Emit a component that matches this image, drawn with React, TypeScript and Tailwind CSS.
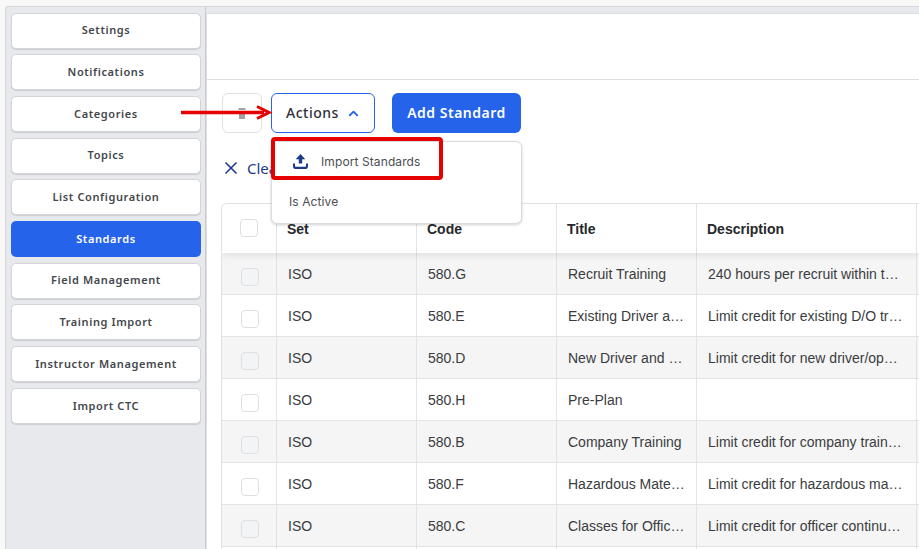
import React from 'react';
import { ChevronUp, X } from 'lucide-react';

const menuItems = [
  'Settings',
  'Notifications',
  'Categories',
  'Topics',
  'List Configuration',
  'Standards',
  'Field Management',
  'Training Import',
  'Instructor Management',
  'Import CTC',
];

const rows = [
  ['ISO', '580.G', 'Recruit Training', '240 hours per recruit within the first year of employment'],
  ['ISO', '580.E', 'Existing Driver and Operator', 'Limit credit for existing D/O training hours per year'],
  ['ISO', '580.D', 'New Driver and Operator', 'Limit credit for new driver/operator training hours'],
  ['ISO', '580.H', 'Pre-Plan', ''],
  ['ISO', '580.B', 'Company Training', 'Limit credit for company training hours per member'],
  ['ISO', '580.F', 'Hazardous Materials', 'Limit credit for hazardous materials training hours'],
  ['ISO', '580.C', 'Classes for Officers', 'Limit credit for officer continuing education hours'],
  ['ISO', '580.A', 'Facilities', 'Limit credit for facilities training'],
];

const Checkbox = ({ muted }: { muted?: boolean }) => (
  <div className={`w-[18px] h-[18px] rounded-[4px] border border-[#dcdfe3] ${muted ? 'bg-[#f3f4f6]' : 'bg-white'}`} />
);

const App: React.FC = () => {
  return (
    <div className="relative w-[919px] h-[549px] overflow-hidden bg-[#f8f8f8] pl-[5px] pt-[6px] font-['Noto_Sans',sans-serif]">
      <div className="flex h-[560px] rounded-tl-[4px] border-l border-t border-[#d5d6d9] bg-[#e8e9ed]">
        {/* side menu */}
        <div className="w-[200px] shrink-0 border-r border-[#c9cbcf] pl-[5px] pt-[5.6px]">
          <div className="flex w-[190px] flex-col gap-[5.7px]">
            {menuItems.map((item) => (
              <div
                key={item}
                className={`flex h-[36px] items-center justify-center rounded-[5px] text-[11px] font-semibold tracking-[0.6px] ${
                  item === 'Standards'
                    ? 'bg-[#2563eb] text-white'
                    : 'border border-[#d4d5d8] bg-white text-[#44474c] shadow-[0_1px_1px_rgba(0,0,0,0.12)]'
                }`}
              >
                {item}
              </div>
            ))}
          </div>
        </div>

        {/* content */}
        <div className="mt-[6px] min-w-0 flex-1 border-t border-l border-[#dcdee2] bg-white">
          <div className="h-[66px] border-b border-[#dcdee2]" />
          <div className="flex h-[53px] items-end gap-[9px] pl-[15px]">
            <div className="flex h-10 w-10 items-center justify-center rounded-[6px] border border-[#dfe1e4]">
              <svg width="8" height="11" viewBox="0 0 8 11">
                <path d="M0.5 0h7v2h-7zM1 3h6v8h-6z" fill="#a3a3a3" />
              </svg>
            </div>
            <div className="flex h-10 w-[104px] items-center gap-[7px] rounded-[6px] border border-[#2563eb] pb-[2px] pl-[14px] text-[14px] font-medium tracking-[0.5px] text-[#2f3136]">
              Actions
              <ChevronUp className="mt-[2px] h-[15px] w-[15px] text-[#2563eb]" strokeWidth={3} />
            </div>
            <div className="ml-[8px] flex h-10 w-[129px] items-center justify-center rounded-[6px] bg-[#2563eb] pb-[2px] text-[14px] font-semibold tracking-[0.5px] text-white">
              Add Standard
            </div>
          </div>
          <div className="flex h-[70px] items-center gap-[6px] pl-[14px] text-[15px] text-[#1e3a8a]">
            <X className="h-[20px] w-[20px]" strokeWidth={2} />
            Clear Filters
          </div>

          {/* table */}
          <div className="ml-[14px] overflow-hidden rounded-tl-[6px] border-l border-t border-[#dfe1e5] font-['Liberation_Sans',sans-serif] text-[14px]">
            <div className="relative z-10 flex h-[49px] bg-white font-bold text-[#26282c] shadow-[0_3px_6px_rgba(0,0,0,0.08)]">
              <div className="flex w-[55px] shrink-0 items-center justify-center border-r border-[#e1e3e7] pb-[2px]">
                <Checkbox />
              </div>
              <div className="flex w-[140px] shrink-0 items-center border-r border-[#e1e3e7] pl-[10px] pt-[2px]">Set</div>
              <div className="flex w-[140px] shrink-0 items-center border-r border-[#e1e3e7] pl-[10px] pt-[2px]">Code</div>
              <div className="flex w-[140px] shrink-0 items-center border-r border-[#e1e3e7] pl-[10px] pt-[2px]">Title</div>
              <div className="flex w-[220px] shrink-0 items-center border-r border-[#e1e3e7] pl-[10px] pt-[2px]">Description</div>
            </div>
            {rows.map((row, i) => (
              <div
                key={row[1]}
                className={`flex h-[42px] border-b border-[#e1e3e7] text-[#3a3c40] ${i % 2 === 0 ? 'bg-[#f5f5f5]' : 'bg-white'}`}
              >
                <div className="flex w-[55px] shrink-0 items-center justify-center border-r border-[#e1e3e7] pl-[2px] pt-[6px]">
                  <Checkbox muted={i % 2 === 0} />
                </div>
                {row.map((cell, c) => (
                  <div
                    key={c}
                    className={`flex shrink-0 items-center border-r border-[#e1e3e7] pt-[2px] pl-[11px] ${c === 3 ? 'w-[220px] pr-[13px]' : 'w-[140px] pr-[8px]'}`}
                  >
                    <span className="truncate">{cell}</span>
                  </div>
                ))}
              </div>
            ))}
          </div>
        </div>
      </div>

      {/* dropdown */}
      <div className="absolute left-[271px] top-[141px] z-20 h-[83px] w-[251px] rounded-[6px] border border-[#d8dbe0] bg-white font-['Inter',sans-serif] text-[12px] tracking-[0.1px] text-[#4b4d52] shadow-[0_1px_3px_rgba(0,0,0,0.18)]">
        <div className="flex h-[41px] items-center gap-[12px] pb-[2px] pl-[20px]">
          <svg width="17" height="17" viewBox="0 0 17 17" fill="#1e3a8a">
            <path d="M8.5 1 L13.3 6.2 H10.2 V10.6 H6.8 V6.2 H3.7 Z" />
            <path d="M1 10.5 H3 V13 Q3 13.8 3.8 13.8 H13.2 Q14 13.8 14 13 V10.5 H16 V13.2 Q16 16 13.2 16 H3.8 Q1 16 1 13.2 Z" />
          </svg>
          Import Standards
        </div>
        <div className="flex h-[40px] items-center pb-[2px] pl-[17px]">Is Active</div>
      </div>

      {/* annotation */}
      <div className="absolute left-[271px] top-[137px] z-30 h-[43px] w-[172px] rounded-[4px] border-[4px] border-[#e60000]" />
      <svg className="absolute left-[180px] top-[104px] z-30" width="92" height="18" viewBox="0 0 92 18">
        <path d="M1 8.5 H84" stroke="#e60000" strokeWidth="3.5" />
        <path d="M77 2.5 L89 8.5 L77 14.5" fill="none" stroke="#e60000" strokeWidth="3" />
      </svg>
    </div>
  );
};

export default App;
